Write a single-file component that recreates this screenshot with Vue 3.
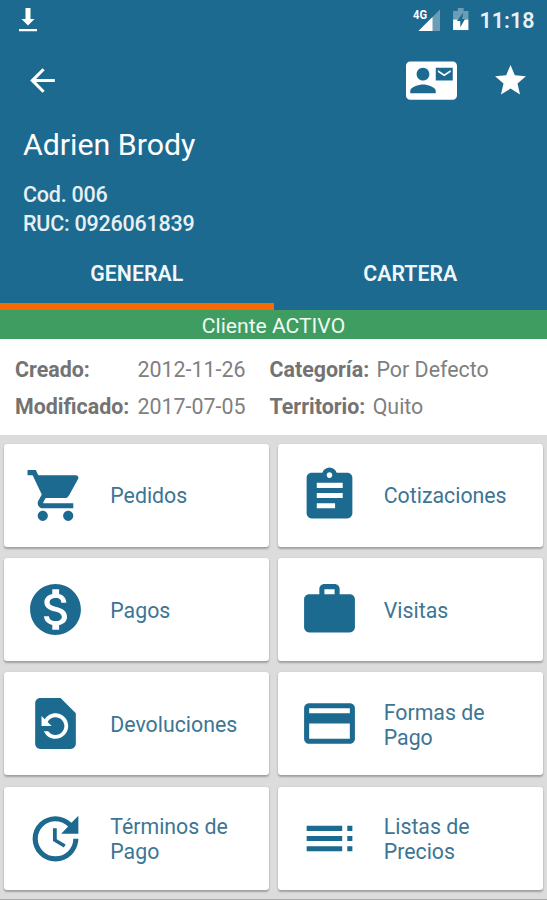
<script setup>
import { ref } from 'vue'

const activeTab = ref('GENERAL')
const tabs = ['GENERAL', 'CARTERA']

const options = [
  {
    label: 'Pedidos',
    icon: 'M7 18c-1.1 0-1.99.9-1.99 2S5.9 22 7 22s2-.9 2-2-.9-2-2-2zM1 2v2h2l3.6 7.59-1.35 2.45c-.16.28-.25.61-.25.96 0 1.1.9 2 2 2h12v-2H7.42c-.14 0-.25-.11-.25-.25l.03-.12.9-1.63h7.45c.75 0 1.41-.41 1.75-1.03l3.58-6.49c.08-.14.12-.31.12-.48 0-.55-.45-1-1-1H5.21l-.94-2H1zm16 16c-1.1 0-1.99.9-1.99 2s.89 2 1.99 2 2-.9 2-2-.9-2-2-2z'
  },
  {
    label: 'Cotizaciones',
    icon: 'M19 3h-4.18C14.4 1.84 13.3 1 12 1c-1.3 0-2.4.84-2.82 2H5c-1.1 0-2 .9-2 2v14c0 1.1.9 2 2 2h14c1.1 0 2-.9 2-2V5c0-1.1-.9-2-2-2zm-7-.1c.6 0 1.1.5 1.1 1.1s-.5 1.1-1.1 1.1-1.1-.5-1.1-1.1.5-1.1 1.1-1.1zm2.2 14.1H7v-2h7.2v2zm3-4H7v-2h10.2v2zm0-4H7V7h10.2v2z'
  },
  {
    label: 'Pagos',
    icon: 'M12 2C6.48 2 2 6.48 2 12s4.48 10 10 10 10-4.48 10-10S17.52 2 12 2zm1.41 16.09V20h-2.67v-1.93c-1.71-.36-3.16-1.46-3.27-3.4h1.96c.1 1.05.82 1.87 2.65 1.87 1.96 0 2.4-.98 2.4-1.59 0-.83-.44-1.61-2.67-2.14-2.48-.6-4.18-1.62-4.18-3.67 0-1.72 1.39-2.84 3.11-3.21V4h2.67v1.95c1.86.45 2.79 1.86 2.85 3.39H14.3c-.05-1.11-.64-1.87-2.22-1.87-1.5 0-2.4.68-2.4 1.64 0 .84.65 1.39 2.67 1.91s4.18 1.39 4.18 3.91c-.01 1.83-1.38 2.83-3.12 3.16z'
  },
  {
    label: 'Visitas',
    icon: 'M20 6h-4V4c0-1.1-.9-2-2-2h-4c-1.1 0-2 .9-2 2v2H4c-1.1 0-2 .9-2 2v11c0 1.1.9 2 2 2h16c1.1 0 2-.9 2-2V8c0-1.1-.9-2-2-2zm-6 0h-4V4h4v2z'
  },
  {
    label: 'Devoluciones',
    icon: 'M14 2H6c-1.1 0-1.99.9-1.99 2L4 20c0 1.1.89 2 1.99 2H18c1.1 0 2-.9 2-2V8l-6-6zm-2 16c-2.05 0-3.81-1.24-4.58-3h1.71c.63.9 1.68 1.5 2.87 1.5 1.93 0 3.5-1.57 3.5-3.5S13.93 9.5 12 9.5c-1.35 0-2.52.78-3.1 1.9l1.6 1.6h-4V9l1.3 1.3C8.69 8.92 10.23 8 12 8c2.76 0 5 2.24 5 5s-2.24 5-5 5z'
  },
  {
    label: 'Formas de Pago',
    icon: 'M20 4H4c-1.11 0-1.99.89-1.99 2L2 18c0 1.11.89 2 2 2h16c1.11 0 2-.89 2-2V6c0-1.11-.89-2-2-2zm0 14H4v-6h16v6zm0-10H4V6h16v2z'
  },
  {
    label: 'Términos de Pago',
    icon: 'M21 10.12h-6.78l2.74-2.82c-2.73-2.7-7.15-2.8-9.88-.1-2.73 2.71-2.73 7.08 0 9.79 2.73 2.71 7.15 2.71 9.88 0C18.32 15.65 19 14.08 19 12.1h2c0 1.98-.88 4.55-2.64 6.29-3.51 3.48-9.21 3.48-12.72 0-3.5-3.47-3.53-9.11-.02-12.58 3.51-3.47 9.14-3.47 12.65 0L21 3v7.12zM12.5 8v4.25l3.5 2.08-.72 1.21L11 13V8h1.5z'
  },
  {
    label: 'Listas de Precios',
    icon: 'M3 9h14V7H3v2zm0 4h14v-2H3v2zm0 4h14v-2H3v2zm16 0h2v-2h-2v2zm0-10v2h2V7h-2zm0 6h2v-2h-2v2z'
  }
]
</script>

<template>
  <div class="screen">
    <header class="header">
      <div class="status-bar">
        <svg class="download" viewBox="0 0 20 24">
          <path d="M7.5 0h5v11h4L10 17.5 3.5 11h4zM1 21h18v2.3H1z" />
        </svg>
        <div class="status-right">
          <svg class="signal" viewBox="0 0 28 24">
            <path d="M27 1.5V23H5.500z" opacity="0.35" />
            <path d="M19.500 9V23H5.500z" />
            <text x="0" y="10.500" textLength="14" lengthAdjust="spacingAndGlyphs">4G</text>
          </svg>
          <svg class="battery" viewBox="0 0 16 24">
            <path d="M5 0h6v3h5v9H0V3h5z" opacity="0.35" />
            <path d="M0 12h16v11H0z" />
            <path class="bolt" d="M10.500 5L4 13.500h3.500v6.500L12.500 11.500H9.500z" />
          </svg>
          <span class="time">11:18</span>
        </div>
      </div>

      <div class="toolbar">
        <svg class="back" viewBox="0 0 24 24">
          <path d="M20 11H7.83l5.59-5.59L12 4l-8 8 8 8 1.41-1.41L7.83 13H20v-2z" />
        </svg>
        <div class="actions">
          <svg class="contact" viewBox="0 0 24 24">
            <path d="M21 8V7l-3 2-3-2v1l3 2 3-2zm1-5H2C.9 3 0 3.9 0 5v14c0 1.1.9 2 2 2h20c1.1 0 1.99-.9 1.99-2L24 5c0-1.1-.9-2-2-2zM8 6c1.66 0 3 1.34 3 3s-1.34 3-3 3-3-1.34-3-3 1.34-3 3-3zm6 12H2v-1c0-2 4-3.1 6-3.1s6 1.1 6 3.1v1zm8-6h-8V6h8v6z" />
          </svg>
          <svg class="star" viewBox="0 0 24 24">
            <path d="M12 17.27L18.18 21l-1.64-7.03L22 9.24l-7.19-.61L12 2 9.19 8.63 2 9.24l5.46 4.73L5.82 21z" />
          </svg>
        </div>
      </div>

      <div class="client">
        <h1 class="name">Adrien Brody</h1>
        <p>Cod. 006</p>
        <p>RUC: 0926061839</p>
      </div>

      <nav class="tabs">
        <button
          v-for="tab in tabs"
          :key="tab"
          class="tab"
          :class="{ active: tab === activeTab }"
          @click="activeTab = tab"
        >
          {{ tab }}
        </button>
      </nav>
    </header>

    <div class="client-status">Cliente ACTIVO</div>

    <section class="details">
      <b>Creado:</b>
      <span>2012-11-26</span>
      <div><b>Categoría:</b> <span>Por Defecto</span></div>
      <b>Modificado:</b>
      <span>2017-07-05</span>
      <div><b>Territorio:</b> <span>Quito</span></div>
    </section>

    <main class="grid">
      <div v-for="option in options" :key="option.label" class="card">
        <svg class="card-icon" viewBox="0 0 24 24">
          <path :d="option.icon" />
        </svg>
        <span class="card-label">{{ option.label }}</span>
      </div>
    </main>
  </div>
</template>

<style>
body {
  margin: 0;
  overflow: hidden;
}
</style>

<style scoped>
.screen {
  box-sizing: border-box;
  display: flex;
  flex-direction: column;
  width: 547px;
  height: 900px;
  overflow: hidden;
  background: #dcdcdc;
  border-bottom: 1px solid #aaa;
  font-family: Roboto, sans-serif;
}

svg {
  display: block;
  flex: none;
  fill: currentColor;
}

.header {
  height: 310px;
  display: flex;
  flex-direction: column;
  flex: none;
  background: #1d6a90;
  color: #fff;
}

.status-bar {
  display: flex;
  justify-content: space-between;
  height: 37px;
  padding: 7.5px 12.5px 0 18px;
  box-sizing: border-box;
}

.download {
  width: 20px;
  height: 24px;
}

.status-right {
  display: flex;
  align-items: flex-start;
}

.signal {
  width: 28px;
  height: 24px;
  margin-right: 12px;
  overflow: visible;
}

.signal text {
  font-size: 12.5px;
  font-weight: 700;
}

.battery {
  width: 15.5px;
  height: 23px;
  margin-right: 11px;
}

.bolt {
  fill: #1d6a90;
}

.time {
  font-size: 21.5px;
  font-weight: 600;
  line-height: 25px;
  opacity: 0.9;
}

.toolbar {
  display: flex;
  align-items: center;
  justify-content: space-between;
  height: 88px;
  padding: 0 18.5px 0 24px;
}

.actions {
  display: flex;
  align-items: center;
  gap: 35px;
}

.back,
.star {
  width: 37px;
  height: 37px;
}

.contact {
  width: 51px;
  height: 51px;
}

.client {
  padding: 3px 23px 0;
}

.name {
  margin: 0 0 17px;
  font-size: 30.3px;
  font-weight: 400;
  line-height: 36px;
}

.client p {
  margin: 0;
  font-size: 21.5px;
  font-weight: 500;
  letter-spacing: -0.23px;
  line-height: 29px;
  opacity: 0.9;
}

.tabs {
  display: flex;
  height: 73px;
  margin-top: auto;
}

.tab {
  flex: 1;
  padding: 7px 0 0;
  border: 0;
  border-bottom: 7px solid transparent;
  background: none;
  color: #f0f7fb;
  font: 600 21.3px Roboto, sans-serif;
}

.tab.active {
  border-bottom-color: #f96a04;
}

.client-status {
  flex: none;
  height: 29px;
  background: #409d61;
  color: #f0faf3;
  font-size: 21.1px;
  line-height: 31px;
  text-align: center;
}

.details {
  display: grid;
  flex: none;
  grid-template-columns: 122.5px 132px 1fr;
  grid-auto-rows: 36.5px;
  align-items: center;
  box-sizing: border-box;
  height: 96px;
  padding: 12.5px 15px;
  background: #fff;
  color: #808080;
  font-size: 21.4px;
  white-space: nowrap;
}

.details b {
  color: #737373;
  font-weight: 700;
}

.details div span {
  margin-left: 2px;
}

.grid {
  display: grid;
  grid-template-columns: 1fr 1fr;
  grid-auto-rows: 103px;
  gap: 11.4px 8.5px;
  padding: 8.5px 4.3px 0;
}

.card {
  display: flex;
  align-items: center;
  box-sizing: border-box;
  padding-left: 21px;
  border-radius: 3px;
  background: #fff;
  box-shadow: 0 2px 2px rgba(0, 0, 0, 0.26), 0 0 2px rgba(0, 0, 0, 0.1);
  color: #1d6a90;
}

.card-icon {
  width: 61px;
  height: 61px;
}

.card-label {
  width: 140px;
  margin-left: 24px;
  padding-top: 1.5px;
  color: #3d7594;
  font-size: 21.3px;
  line-height: 25px;
}
</style>
